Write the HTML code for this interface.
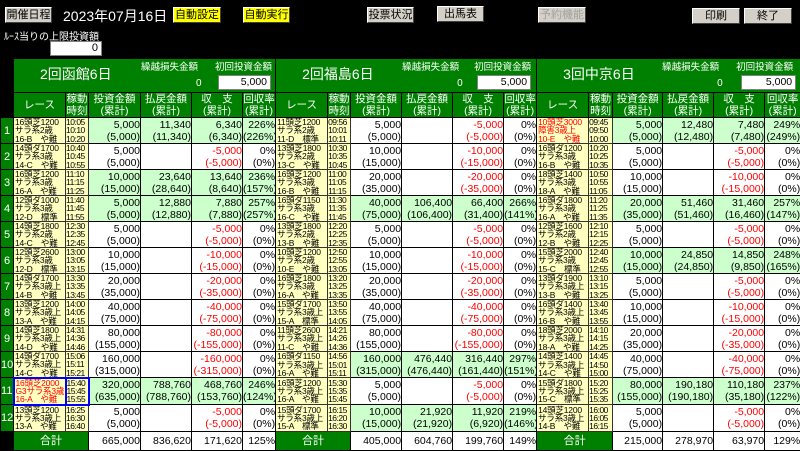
<!DOCTYPE html>
<html><head><meta charset="utf-8"><style>
*{margin:0;padding:0;box-sizing:border-box}
body{width:800px;height:448px;background:#000;overflow:hidden;position:relative;font-family:"Liberation Sans","Noto Sans CJK JP",sans-serif}
.btn{position:absolute;height:16px;background:#d4d0c8;border:1px solid #fff;border-right-color:#404040;border-bottom-color:#404040;font-size:11px;line-height:14px;text-align:center;color:#000}
.y{background:#ffff00}
.dis{color:#a0a0a0}
table{position:absolute;left:0;top:58px;border-collapse:collapse;table-layout:fixed;width:800px}
td{border:1px solid #000;padding:0;overflow:hidden;white-space:nowrap;background:#fff;color:#000;font-size:10.5px;line-height:12px;text-align:right;height:26px;vertical-align:middle}
td.r,td.t{background:#ffffc0;text-align:left;font-size:8.5px;line-height:8.3px;padding-left:1px;border:1px solid #333;letter-spacing:-0.2px}
td.t{font-size:8.5px;letter-spacing:-0.5px;padding-left:0}
td.k{color:#f00}
td.m{color:#f00}
td.g{background:#ccffcc}
td.no{background:#008000;color:#fff;text-align:center;font-size:11px}
td.bk{background:#000;border-color:#000}
td.h{background:#008000;color:#fff;text-align:center;font-size:10.5px;line-height:12px;height:25px}
td.hd{background:#008000;color:#fff;height:34px;position:relative;text-align:left}
.tt{position:absolute;left:26px;top:9px;font-size:14px}
.l1{position:absolute;top:3px;font-size:9.5px}
.zero{position:absolute;top:19px;font-size:10px}
.inp{position:absolute;top:16px;height:15px;background:#fff;color:#000;font-size:10.5px;line-height:13px;text-align:right;padding-right:3px;border:1px solid #808080}
td.tot{height:19px;line-height:12px}
td.sg{background:#008000;color:#fff;text-align:center;font-size:11px}
</style></head><body>
<div class="btn" style="left:5px;top:7px;width:47px">開催日程</div>
<div style="position:absolute;left:63px;top:6px;color:#fff;font-size:14px">2023年07月16日</div>
<div class="btn y" style="left:173px;top:7px;width:48px">自動設定</div>
<div class="btn y" style="left:243px;top:7px;width:47px">自動実行</div>
<div class="btn" style="left:367px;top:7px;width:47px">投票状況</div>
<div class="btn" style="left:437px;top:6px;width:47px">出馬表</div>
<div class="btn dis" style="left:538px;top:7px;width:48px">予約機能</div>
<div class="btn" style="left:692px;top:8px;width:48px">印刷</div>
<div class="btn" style="left:744px;top:8px;width:48px">終了</div>
<div style="position:absolute;left:4px;top:28px;color:#fff;font-size:10px">ﾙｰｽ当りの上限投資額</div>
<div style="position:absolute;left:50px;top:41px;width:52px;height:15px;background:#fff;border:1px solid #808080;font-size:11px;text-align:right;padding-right:3px;line-height:13px">0</div>
<table>
<colgroup><col style="width:13px"><col style="width:52px"><col style="width:23px"><col style="width:52px"><col style="width:51px"><col style="width:51px"><col style="width:33px"><col style="width:52px"><col style="width:23px"><col style="width:51px"><col style="width:51px"><col style="width:51px"><col style="width:33px"><col style="width:52px"><col style="width:24px"><col style="width:50px"><col style="width:51px"><col style="width:51px"><col style="width:36px"></colgroup>
<tr><td class="bk" rowspan="2"></td>
<td class="hd" colspan="6"><span class="tt">2回函館6日</span><span class="l1" style="left:127px">繰越損失金額</span><span class="zero" style="left:182px">0</span><span class="l1" style="left:201px">初回投資金額</span><div class="inp" style="left:204px;width:53px">5,000</div></td>
<td class="hd" colspan="6"><span class="tt">2回福島6日</span><span class="l1" style="left:126px">繰越損失金額</span><span class="zero" style="left:181px">0</span><span class="l1" style="left:198px">初回投資金額</span><div class="inp" style="left:201px;width:54px">5,000</div></td>
<td class="hd" colspan="6"><span class="tt">3回中京6日</span><span class="l1" style="left:125px">繰越損失金額</span><span class="zero" style="left:180px">0</span><span class="l1" style="left:199px">初回投資金額</span><div class="inp" style="left:204px;width:55px">5,000</div></td></tr>
<tr><td class="h">レース</td><td class="h">稼動<br>時刻</td><td class="h">投資金額<br>(累計)</td><td class="h">払戻金額<br>(累計)</td><td class="h">収　支<br>(累計)</td><td class="h">回収率<br>(累計)</td>
<td class="h">レース</td><td class="h">稼動<br>時刻</td><td class="h">投資金額<br>(累計)</td><td class="h">払戻金額<br>(累計)</td><td class="h">収　支<br>(累計)</td><td class="h">回収率<br>(累計)</td>
<td class="h">レース</td><td class="h">稼動<br>時刻</td><td class="h">投資金額<br>(累計)</td><td class="h">払戻金額<br>(累計)</td><td class="h">収　支<br>(累計)</td><td class="h">回収率<br>(累計)</td></tr>

<tr><td class="no">1</td>
<td class="r">16頭芝1200<br>サラ系2歳<br>16-B　や難</td><td class="t">10:05<br>10:10<br>10:20</td><td class="g">5,000<br>(5,000)</td><td class="g">11,340<br>(11,340)</td><td class="g">6,340<br>(6,340)</td><td class="g">226%<br>(226%)</td>
<td class="r">11頭芝1200<br>サラ系2歳<br>11-D　標準</td><td class="t">09:56<br>10:01<br>10:11</td><td>5,000<br>(5,000)</td><td></td><td class="m">-5,000<br>(-5,000)</td><td>0%<br>(0%)</td>
<td class="r k">10頭芝3000<br>障害3歳上<br>10-E　や難</td><td class="t">09:45<br>09:50<br>10:00</td><td class="g">5,000<br>(5,000)</td><td class="g">12,480<br>(12,480)</td><td class="g">7,480<br>(7,480)</td><td class="g">249%<br>(249%)</td></tr>

<tr><td class="no">2</td>
<td class="r">14頭ダ1700<br>サラ系3歳<br>14-C　や難</td><td class="t">10:40<br>10:45<br>10:55</td><td>5,000<br>(5,000)</td><td></td><td class="m">-5,000<br>(-5,000)</td><td>0%<br>(0%)</td>
<td class="r">13頭芝1800<br>サラ系2歳<br>13-C　や難</td><td class="t">10:30<br>10:35<br>10:45</td><td>10,000<br>(15,000)</td><td></td><td class="m">-10,000<br>(-15,000)</td><td>0%<br>(0%)</td>
<td class="r">16頭ダ1200<br>サラ系3歳<br>16-B　や難</td><td class="t">10:20<br>10:25<br>10:35</td><td>5,000<br>(5,000)</td><td></td><td class="m">-5,000<br>(-5,000)</td><td>0%<br>(0%)</td></tr>

<tr><td class="no">3</td>
<td class="r">16頭芝1200<br>サラ系3歳<br>16-A　や難</td><td class="t">11:10<br>11:15<br>11:25</td><td class="g">10,000<br>(15,000)</td><td class="g">23,640<br>(28,640)</td><td class="g">13,640<br>(8,640)</td><td class="g">236%<br>(157%)</td>
<td class="r">16頭芝1200<br>サラ系3歳<br>16-B　や難</td><td class="t">11:00<br>11:05<br>11:15</td><td>20,000<br>(35,000)</td><td></td><td class="m">-20,000<br>(-35,000)</td><td>0%<br>(0%)</td>
<td class="r">18頭芝1400<br>サラ系3歳<br>18-A　や難</td><td class="t">10:50<br>10:55<br>11:05</td><td>10,000<br>(15,000)</td><td></td><td class="m">-10,000<br>(-15,000)</td><td>0%<br>(0%)</td></tr>

<tr><td class="no">4</td>
<td class="r">12頭ダ1000<br>サラ系3歳<br>12-D　標準</td><td class="t">11:40<br>11:45<br>11:55</td><td class="g">5,000<br>(5,000)</td><td class="g">12,880<br>(12,880)</td><td class="g">7,880<br>(7,880)</td><td class="g">257%<br>(257%)</td>
<td class="r">16頭ダ1150<br>サラ系3歳<br>16-C　や難</td><td class="t">11:30<br>11:35<br>11:45</td><td class="g">40,000<br>(75,000)</td><td class="g">106,400<br>(106,400)</td><td class="g">66,400<br>(31,400)</td><td class="g">266%<br>(141%)</td>
<td class="r">16頭ダ1800<br>サラ系3歳<br>16-A　や難</td><td class="t">11:20<br>11:25<br>11:35</td><td class="g">20,000<br>(35,000)</td><td class="g">51,460<br>(51,460)</td><td class="g">31,460<br>(16,460)</td><td class="g">257%<br>(147%)</td></tr>

<tr><td class="no">5</td>
<td class="r">14頭芝1800<br>サラ系2歳<br>14-C　や難</td><td class="t">12:30<br>12:35<br>12:45</td><td>5,000<br>(5,000)</td><td></td><td class="m">-5,000<br>(-5,000)</td><td>0%<br>(0%)</td>
<td class="r">13頭芝1800<br>サラ系2歳<br>13-B　や難</td><td class="t">12:20<br>12:25<br>12:35</td><td>5,000<br>(5,000)</td><td></td><td class="m">-5,000<br>(-5,000)</td><td>0%<br>(0%)</td>
<td class="r">12頭芝1600<br>サラ系2歳<br>12-B　や難</td><td class="t">12:10<br>12:15<br>12:25</td><td>5,000<br>(5,000)</td><td></td><td class="m">-5,000<br>(-5,000)</td><td>0%<br>(0%)</td></tr>

<tr><td class="no">6</td>
<td class="r">12頭芝2600<br>サラ系3歳<br>12-D　標準</td><td class="t">13:00<br>13:05<br>13:15</td><td>10,000<br>(15,000)</td><td></td><td class="m">-10,000<br>(-15,000)</td><td>0%<br>(0%)</td>
<td class="r">10頭芝1200<br>サラ系2歳<br>10-E　や難</td><td class="t">12:50<br>12:55<br>13:05</td><td>10,000<br>(15,000)</td><td></td><td class="m">-10,000<br>(-15,000)</td><td>0%<br>(0%)</td>
<td class="r">15頭芝2000<br>サラ系3歳<br>15-C　標準</td><td class="t">12:40<br>12:45<br>12:55</td><td class="g">10,000<br>(15,000)</td><td class="g">24,850<br>(24,850)</td><td class="g">14,850<br>(9,850)</td><td class="g">248%<br>(165%)</td></tr>

<tr><td class="no">7</td>
<td class="r">14頭ダ1700<br>サラ系3歳上<br>14-B　や難</td><td class="t">13:30<br>13:35<br>13:45</td><td>20,000<br>(35,000)</td><td></td><td class="m">-20,000<br>(-35,000)</td><td>0%<br>(0%)</td>
<td class="r">16頭芝1800<br>サラ系3歳<br>16-A　や難</td><td class="t">13:20<br>13:25<br>13:35</td><td>20,000<br>(35,000)</td><td></td><td class="m">-20,000<br>(-35,000)</td><td>0%<br>(0%)</td>
<td class="r">13頭ダ1900<br>サラ系3歳上<br>13-B　や難</td><td class="t">13:10<br>13:15<br>13:25</td><td>5,000<br>(5,000)</td><td></td><td class="m">-5,000<br>(-5,000)</td><td>0%<br>(0%)</td></tr>

<tr><td class="no">8</td>
<td class="r">13頭芝1200<br>サラ系3歳上<br>13-A　や難</td><td class="t">14:00<br>14:05<br>14:15</td><td>40,000<br>(75,000)</td><td></td><td class="m">-40,000<br>(-75,000)</td><td>0%<br>(0%)</td>
<td class="r">15頭ダ1700<br>サラ系3歳上<br>15-A　標準</td><td class="t">13:50<br>13:55<br>14:05</td><td>40,000<br>(75,000)</td><td></td><td class="m">-40,000<br>(-75,000)</td><td>0%<br>(0%)</td>
<td class="r">16頭ダ1400<br>サラ系3歳上<br>16-B　や難</td><td class="t">13:40<br>13:45<br>13:55</td><td>10,000<br>(15,000)</td><td></td><td class="m">-10,000<br>(-15,000)</td><td>0%<br>(0%)</td></tr>

<tr><td class="no">9</td>
<td class="r">14頭芝1800<br>サラ系3歳上<br>14-D　や難</td><td class="t">14:31<br>14:36<br>14:46</td><td>80,000<br>(155,000)</td><td></td><td class="m">-80,000<br>(-155,000)</td><td>0%<br>(0%)</td>
<td class="r">11頭芝2600<br>サラ系3歳上<br>11-C　や難</td><td class="t">14:21<br>14:26<br>14:36</td><td>80,000<br>(155,000)</td><td></td><td class="m">-80,000<br>(-155,000)</td><td>0%<br>(0%)</td>
<td class="r">18頭芝2000<br>サラ系3歳上<br>18-A　や難</td><td class="t">14:10<br>14:15<br>14:25</td><td>20,000<br>(35,000)</td><td></td><td class="m">-20,000<br>(-35,000)</td><td>0%<br>(0%)</td></tr>

<tr><td class="no">10</td>
<td class="r">14頭ダ1700<br>サラ系3歳上<br>14-C　や難</td><td class="t">15:06<br>15:11<br>15:21</td><td>160,000<br>(315,000)</td><td></td><td class="m">-160,000<br>(-315,000)</td><td>0%<br>(0%)</td>
<td class="r">16頭ダ1150<br>サラ系3歳上<br>16-A　や難</td><td class="t">14:56<br>15:01<br>15:11</td><td class="g">160,000<br>(315,000)</td><td class="g">476,440<br>(476,440)</td><td class="g">316,440<br>(161,440)</td><td class="g">297%<br>(151%)</td>
<td class="r">14頭芝1400<br>サラ系3歳上<br>14-C　や難</td><td class="t">14:45<br>14:50<br>15:00</td><td>40,000<br>(75,000)</td><td></td><td class="m">-40,000<br>(-75,000)</td><td>0%<br>(0%)</td></tr>

<tr><td class="no">11</td>
<td class="r k" style="border:2px solid #00f">16頭芝2000<br>G3サラ系3歳<br>16-A　や難</td><td class="t" style="border:2px solid #00f">15:40<br>15:45<br>15:55</td><td class="g">320,000<br>(635,000)</td><td class="g">788,760<br>(788,760)</td><td class="g">468,760<br>(153,760)</td><td class="g">246%<br>(124%)</td>
<td class="r">16頭芝1200<br>サラ系3歳上<br>16-A　や難</td><td class="t">15:30<br>15:35<br>15:45</td><td>5,000<br>(5,000)</td><td></td><td class="m">-5,000<br>(-5,000)</td><td>0%<br>(0%)</td>
<td class="r">15頭ダ1800<br>サラ系3歳上<br>15-C　標準</td><td class="t">15:20<br>15:25<br>15:35</td><td class="g">80,000<br>(155,000)</td><td class="g">190,180<br>(190,180)</td><td class="g">110,180<br>(35,180)</td><td class="g">237%<br>(122%)</td></tr>

<tr><td class="no">12</td>
<td class="r">13頭芝1200<br>サラ系3歳上<br>13-A　や難</td><td class="t">16:25<br>16:30<br>16:40</td><td>5,000<br>(5,000)</td><td></td><td class="m">-5,000<br>(-5,000)</td><td>0%<br>(0%)</td>
<td class="r">15頭ダ1700<br>サラ系3歳上<br>15-A　標準</td><td class="t">16:15<br>16:20<br>16:30</td><td class="g">10,000<br>(15,000)</td><td class="g">21,920<br>(21,920)</td><td class="g">11,920<br>(6,920)</td><td class="g">219%<br>(146%)</td>
<td class="r">14頭芝1200<br>サラ系3歳上<br>14-B　や難</td><td class="t">16:00<br>16:05<br>16:15</td><td>5,000<br>(5,000)</td><td></td><td class="m">-5,000<br>(-5,000)</td><td>0%<br>(0%)</td></tr>

<tr><td class="bk tot"></td>
<td class="sg tot" colspan="2">合計</td><td class="tot">665,000</td><td class="tot">836,620</td><td class="tot">171,620</td><td class="tot">125%</td>
<td class="sg tot" colspan="2">合計</td><td class="tot">405,000</td><td class="tot">604,760</td><td class="tot">199,760</td><td class="tot">149%</td>
<td class="sg tot" colspan="2">合計</td><td class="tot">215,000</td><td class="tot">278,970</td><td class="tot">63,970</td><td class="tot">129%</td></tr>
</table>
</body></html>
